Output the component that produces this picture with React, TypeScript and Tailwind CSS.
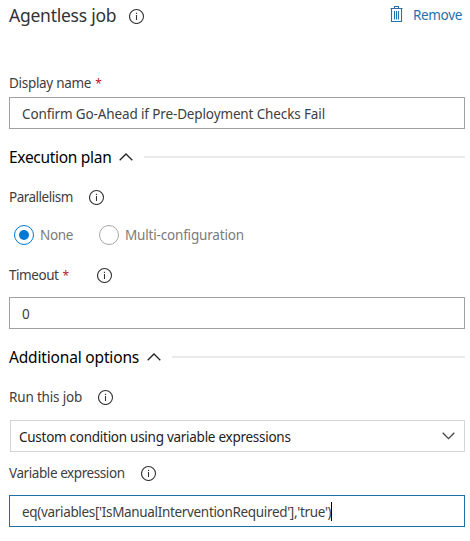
import type { ReactNode } from "react";

function InfoIcon() {
  return (
    <svg width="16" height="16" viewBox="0 0 16 16" fill="none" className="shrink-0 text-[#333]">
      <circle cx="7.5" cy="8.5" r="7" stroke="currentColor" strokeWidth="1.1" />
      <path d="M7.5 7v5" stroke="currentColor" strokeWidth="1.1" />
      <path d="M7.5 4.8v1.2" stroke="currentColor" strokeWidth="1.2" />
    </svg>
  );
}

function TrashIcon() {
  return (
    <svg width="14" height="17" viewBox="0 0 14 17" fill="none" stroke="currentColor" strokeWidth="1.1" className="relative -top-px shrink-0">
      <path d="M0.5 2.5h12M4.5 2.5V0.5h4v2M1.5 2.5v13h10v-13M4.5 5v8.5M6.5 5v8.5M8.5 5v8.5" />
    </svg>
  );
}

function Section({ title, width, children }: { title: string; width: string; children?: ReactNode }) {
  return (
    <div className="mt-[18px] flex h-5 items-center">
      <h2 className={`${width} shrink-0 whitespace-nowrap text-[15.5px] text-black`}>{title}</h2>
      <svg width="14" height="8" viewBox="0 0 14 8" fill="none" stroke="#222" strokeWidth="1.3" className="shrink-0">
        <path d="M0.7 7.3 7 1l6.3 6.3" />
      </svg>
      {children}
      <div className="ml-[11px] h-0.5 flex-1 bg-[#eaeaea]" />
    </div>
  );
}

function Label({ text, width, required }: { text: string; width: string; required?: boolean }) {
  return (
    <span className={`${width} shrink-0 whitespace-nowrap`}>
      {text}
      {required && <span className="ml-[4px] text-[12px] text-[#b5202a]">*</span>}
    </span>
  );
}

export default function App() {
  return (
    <main className="h-[541px] w-[470px] bg-white pl-[9px] pr-[5px] font-['Noto_Sans',sans-serif] text-[13.5px] leading-5 tracking-[-0.2px] text-[#404040]">
      <header className="flex h-[30px] items-center">
        <h1 className="w-[120px] whitespace-nowrap text-[17.5px] tracking-[-0.25px] text-[#333]">Agentless job</h1>
        <span className="mt-0.5">
          <InfoIcon />
        </span>
        <button className="ml-auto mr-[3px] flex items-center gap-[9px] text-[#2372b0]">
          <TrashIcon />
          <span className="w-[49px] whitespace-nowrap text-left tracking-[-0.35px]">Remove</span>
        </button>
      </header>

      <div className="mt-[43px] flex h-5 items-center">
        <Label text="Display name" width="w-[120px] tracking-[-0.3px]" required />
      </div>
      <div className="mt-1 flex h-8 items-center border border-[#a0a0a0] pl-3 pt-0.5">
        <span className="whitespace-nowrap tracking-[-0.13px]">Confirm Go-Ahead if Pre-Deployment Checks Fail</span>
      </div>

      <Section title="Execution plan" width="w-[110px] tracking-[-0.3px]" />
      <div className="mt-5 flex h-5 items-center">
        <Label text="Parallelism" width="w-[80px] tracking-[-0.5px]" />
        <InfoIcon />
      </div>
      <div className="mt-[18px] flex h-5 items-center pl-[5px] text-[#7b7b7b]">
        <span className="flex size-5 shrink-0 items-center justify-center rounded-full border border-[#0078d4]">
          <span className="size-2.5 rounded-full bg-[#0078d4]" />
        </span>
        <span className="ml-1.5 w-[59px] tracking-[-0.35px]">None</span>
        <span className="size-5 shrink-0 rounded-full border border-[#a6a6a6]" />
        <span className="ml-1.5 whitespace-nowrap tracking-[-0.18px]">Multi-configuration</span>
      </div>
      <div className="mt-5 flex h-5 items-center">
        <Label text="Timeout" width="w-[88px] tracking-[-0.45px]" required />
        <InfoIcon />
      </div>
      <div className="mt-3 flex h-8 items-center border border-[#a0a0a0] pl-3 pt-0.5">0</div>

      <Section title="Additional options" width="w-[138px] tracking-[-0.17px]" />
      <div className="mt-5 flex h-5 items-center">
        <Label text="Run this job" width="w-[89px] tracking-[-0.17px]" />
        <InfoIcon />
      </div>
      <div className="ml-px mt-[13px] flex h-8 items-center justify-between border border-[#d2d4d6] pl-2 pr-[9px] text-[#222]">
        <span className="whitespace-nowrap pt-0.5 tracking-[-0.27px]">Custom condition using variable expressions</span>
        <svg width="13" height="8" viewBox="0 0 13 8" fill="none" stroke="#444" strokeWidth="1.3">
          <path d="M0.7 0.8 6.5 6.6l5.8-5.8" />
        </svg>
      </div>
      <div className="mt-[11px] flex h-5 items-center">
        <Label text="Variable expression" width="w-[132px] tracking-[-0.42px]" />
        <InfoIcon />
      </div>
      <div className="mt-3 flex h-8 items-center border border-[#1e6fa8] pl-3 pt-0.5">
        <span className="whitespace-nowrap tracking-[-0.33px]">eq(variables['IsManualInterventionRequired'],'true')</span>
        <span className="mb-0.5 h-[19px] w-px bg-black" />
      </div>
    </main>
  );
}
